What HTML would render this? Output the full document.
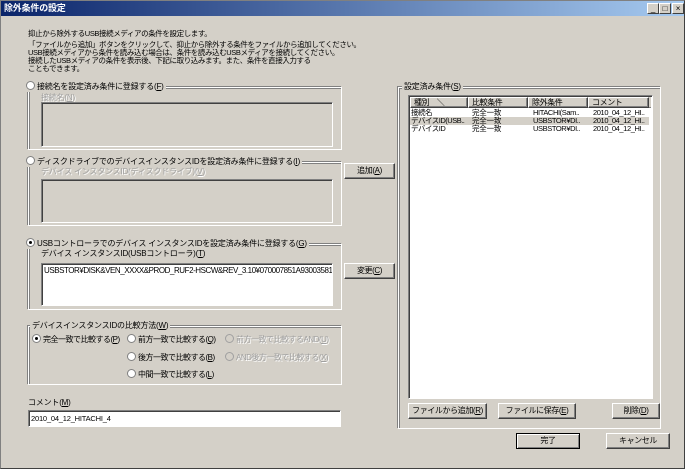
<!DOCTYPE html>
<html><head><meta charset="utf-8"><style>
*{margin:0;padding:0;box-sizing:border-box}
body{width:685px;height:469px;background:#d4d0c8;font-family:"Liberation Sans","Noto Sans CJK JP",sans-serif;font-size:8px;letter-spacing:-0.2px;color:#000;position:relative;overflow:hidden}
.a{position:absolute;white-space:nowrap;line-height:10px}
.win{position:absolute;left:0;top:0;width:685px;height:469px;border:1px solid #808080;border-right-color:#404040;border-bottom-color:#404040}
.title{position:absolute;left:1px;top:1px;width:683px;height:15px;background:linear-gradient(90deg,#0a246a,#a6caf0);color:#fff;font-weight:bold;font-size:9px;padding:2px 3px;line-height:11px}
.grp{position:absolute;border:1px solid #fff;box-shadow:inset 1px 1px 0 #808080,-1px -1px 0 #808080}
.lbl{position:absolute;background:#d4d0c8;padding:0 2px;line-height:10px;white-space:nowrap}
.tb{position:absolute;border:1px solid;border-color:#808080 #fff #fff #808080;box-shadow:inset 1px 1px 0 #404040}
.btn{position:absolute;background:#d4d0c8;border:1px solid;border-color:#fff #404040 #404040 #fff;box-shadow:inset -1px -1px 0 #808080;text-align:center;line-height:14px;white-space:nowrap;letter-spacing:-0.4px}
.rad{display:inline-block;width:9px;height:9px;border-radius:50%;background:#fff;border:1px solid #808080;vertical-align:-1px;margin-right:2px;position:relative}
.rad.on::after{content:"";position:absolute;left:2px;top:2px;width:3px;height:3px;border-radius:50%;background:#000}
.dis{color:#a0a0a0;text-shadow:1px 1px 0 #fff}
.cb{position:absolute;top:3px;width:12px;height:11px;background:#d4d0c8;border:1px solid;border-color:#fff #404040 #404040 #fff;color:#000;font-size:8px;line-height:9px;text-align:center}
.p{font-size:7.5px;letter-spacing:-0.4px}
</style></head><body>
<div class="win"></div>
<div class="title">除外条件の設定</div>
<div class="cb" style="left:647px">_</div><div class="cb" style="left:659px">□</div><div class="cb" style="left:672px">×</div>

<div class="a p" style="left:28px;top:29px">抑止から除外するUSB接続メディアの条件を設定します。</div>
<div class="a p" style="left:28px;top:41px;line-height:8px">「ファイルから追加」ボタンをクリックして、抑止から除外する条件をファイルから追加してください。<br>USB接続メディアから条件を読み込む場合は、条件を読み込むUSBメディアを接続してください。<br>接続したUSBメディアの条件を表示後、下記に取り込みます。また、条件を直接入力する<br>こともできます。</div>

<div class="grp" style="left:28px;top:87px;width:314px;height:63px"></div>
<div class="lbl" style="left:24px;top:81px"><span class="rad"></span>接続名を設定済み条件に登録する(<u>F</u>)</div>
<div class="a dis" style="left:41px;top:93px">接続名(<u>N</u>)</div>
<div class="tb" style="left:41px;top:102px;width:292px;height:45px"></div>

<div class="grp" style="left:28px;top:162px;width:314px;height:64px"></div>
<div class="lbl" style="left:24px;top:156px"><span class="rad"></span>ディスクドライブでのデバイスインスタンスIDを設定済み条件に登録する(<u>I</u>)</div>
<div class="a dis" style="left:41px;top:167px">デバイス インスタンスID(ディスクドライブ)(<u>V</u>)</div>
<div class="tb" style="left:41px;top:179px;width:292px;height:44px"></div>
<div class="btn" style="left:344px;top:163px;width:51px;height:16px">追加(<u>A</u>)</div>

<div class="grp" style="left:28px;top:244px;width:314px;height:66px"></div>
<div class="lbl" style="left:24px;top:238px"><span class="rad on"></span>USBコントローラでのデバイス インスタンスIDを設定済み条件に登録する(<u>G</u>)</div>
<div class="a" style="left:41px;top:249px">デバイス インスタンスID(USBコントローラ)(<u>T</u>)</div>
<div class="tb" style="left:41px;top:263px;width:292px;height:43px;background:#fff;padding:2px 2px;font-size:8px;line-height:10px;letter-spacing:-0.45px;white-space:nowrap;overflow:hidden">USBSTOR¥DISK&amp;VEN_XXXX&amp;PROD_RUF2-HSCW&amp;REV_3.10¥070007851A93003581</div>
<div class="btn" style="left:344px;top:263px;width:51px;height:16px">変更(<u>C</u>)</div>

<div class="grp" style="left:28px;top:326px;width:314px;height:59px"></div>
<div class="lbl" style="left:30px;top:321px">デバイスインスタンスIDの比較方法(<u>W</u>)</div>
<div class="a" style="left:32px;top:334px;letter-spacing:-0.5px"><span class="rad on"></span>完全一致で比較する(<u>P</u>)</div>
<div class="a" style="left:127px;top:334px;letter-spacing:-0.5px"><span class="rad"></span>前方一致で比較する(<u>Q</u>)</div>
<div class="a dis" style="left:225px;top:334px;letter-spacing:-0.5px"><span class="rad" style="border-color:#a0a0a0;background:#d4d0c8"></span>前方一致で比較するAND(<u>U</u>)</div>
<div class="a" style="left:127px;top:352px;letter-spacing:-0.5px"><span class="rad"></span>後方一致で比較する(<u>B</u>)</div>
<div class="a dis" style="left:225px;top:352px;letter-spacing:-0.5px"><span class="rad" style="border-color:#a0a0a0;background:#d4d0c8"></span>AND後方一致で比較する(<u>X</u>)</div>
<div class="a" style="left:127px;top:369px;letter-spacing:-0.5px"><span class="rad"></span>中間一致で比較する(<u>L</u>)</div>

<div class="a" style="left:28px;top:398px">コメント(<u>M</u>)</div>
<div class="tb" style="left:28px;top:410px;width:313px;height:17px;background:#fff;padding:3px 2px;font-size:7.5px">2010_04_12_HITACHI_4</div>

<div class="grp" style="left:398px;top:87px;width:263px;height:342px"></div>
<div class="lbl" style="left:402px;top:82px">設定済み条件(<u>S</u>)</div>
<div class="tb" style="left:408px;top:95px;width:245px;height:304px;background:#fff"></div>
<div style="position:absolute;left:410px;top:97px;width:241px;height:11px;background:#d4d0c8;border-bottom:1px solid #808080"></div>
<div class="btn" style="left:410px;top:97px;width:58px;height:11px;line-height:9px;text-align:left;padding-left:3px">種別　＼</div>
<div class="btn" style="left:468px;top:97px;width:60px;height:11px;line-height:9px;text-align:left;padding-left:3px">比較条件</div>
<div class="btn" style="left:528px;top:97px;width:60px;height:11px;line-height:9px;text-align:left;padding-left:3px">除外条件</div>
<div class="btn" style="left:588px;top:97px;width:61px;height:11px;line-height:9px;text-align:left;padding-left:3px">コメント</div>
<div style="position:absolute;left:410px;top:117px;width:239px;height:8px;background:#d4d0c8"></div>
<div class="a" style="left:411px;top:109px;line-height:8px;font-size:7.5px;letter-spacing:-0.5px">接続名<br>デバイスID(USB..<br>デバイスID</div>
<div class="a" style="left:472px;top:109px;line-height:8px;font-size:7.5px">完全一致<br>完全一致<br>完全一致</div>
<div class="a" style="left:533px;top:109px;line-height:8px;font-size:7.5px;letter-spacing:-0.4px">HITACHI(Sam..<br>USBSTOR¥DI..<br>USBSTOR¥DI..</div>
<div class="a" style="left:593px;top:109px;line-height:8px;font-size:7.5px;letter-spacing:-0.4px">2010_04_12_HI..<br>2010_04_12_HI..<br>2010_04_12_HI..</div>

<div class="btn" style="left:408px;top:403px;width:79px;height:16px">ファイルから追加(<u>R</u>)</div>
<div class="btn" style="left:498px;top:403px;width:78px;height:16px">ファイルに保存(<u>E</u>)</div>
<div class="btn" style="left:612px;top:403px;width:48px;height:16px">削除(<u>D</u>)</div>

<div class="btn" style="left:516px;top:433px;width:64px;height:16px;border:1px solid #000;box-shadow:inset 1px 1px 0 #fff,inset -1px -1px 0 #808080">完了</div>
<div class="btn" style="left:606px;top:433px;width:64px;height:16px">キャンセル</div>
</body></html>
